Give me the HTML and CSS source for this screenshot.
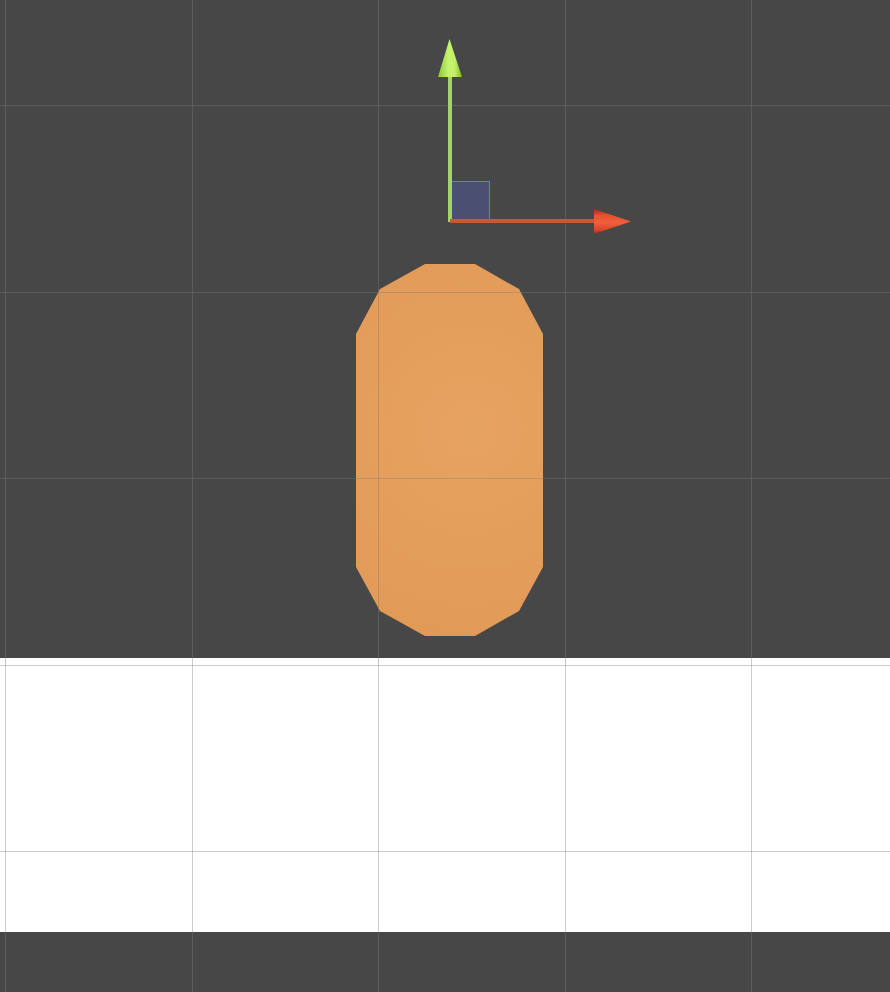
FILE: index.html
```html
<!DOCTYPE html>
<html lang="en">
<head>
<meta charset="utf-8">
<title>Scene View</title>
<link rel="stylesheet" href="styles.css">
</head>
<body>
<div class="scene">
  <div class="viewport"></div>
  <div class="band"></div>
  <div class="footer"></div>

  <svg class="canvas" width="890" height="992" viewBox="0 0 890 992" xmlns="http://www.w3.org/2000/svg">
    <defs>
      <radialGradient id="capFill" cx="470" cy="430" r="220" gradientUnits="userSpaceOnUse">
        <stop offset="0" stop-color="#e7a362"/>
        <stop offset="1" stop-color="#e19956"/>
      </radialGradient>
      <linearGradient id="greenCone" x1="438" y1="0" x2="462" y2="0" gradientUnits="userSpaceOnUse">
        <stop offset="0" stop-color="#8cc63e"/>
        <stop offset="0.45" stop-color="#c6f56c"/>
        <stop offset="0.7" stop-color="#c0f068"/>
        <stop offset="1" stop-color="#7fb536"/>
      </linearGradient>
      <linearGradient id="redCone" x1="0" y1="209" x2="0" y2="234" gradientUnits="userSpaceOnUse">
        <stop offset="0" stop-color="#9a2e16"/>
        <stop offset="0.25" stop-color="#e8502e"/>
        <stop offset="0.55" stop-color="#f0603c"/>
        <stop offset="0.85" stop-color="#d44624"/>
        <stop offset="1" stop-color="#8a2a14"/>
      </linearGradient>
    </defs>

    <polygon class="capsule" fill="url(#capFill)"
      points="425,264 475,264 519,289 543,334 543,567 519,611 475,636 425,636 380,611 356,567 356,334 380,289"/>

    <g class="grid" shape-rendering="crispEdges">
      <line x1="5.5" y1="0" x2="5.5" y2="992"/>
      <line x1="192.5" y1="0" x2="192.5" y2="992"/>
      <line x1="378.5" y1="0" x2="378.5" y2="992"/>
      <line x1="565.5" y1="0" x2="565.5" y2="992"/>
      <line x1="751.5" y1="0" x2="751.5" y2="992"/>
      <line x1="0" y1="105.5" x2="890" y2="105.5"/>
      <line x1="0" y1="292.5" x2="890" y2="292.5"/>
      <line x1="0" y1="478.5" x2="890" y2="478.5"/>
      <line x1="0" y1="665.5" x2="890" y2="665.5"/>
      <line x1="0" y1="851.5" x2="890" y2="851.5"/>
    </g>

    <g class="gizmo">
      <rect class="plane" x="449.5" y="181.5" width="40" height="40"/>
      <rect class="y-shaft" x="448" y="75" width="4" height="147"/>
      <rect class="x-shaft" x="450" y="219" width="146" height="4"/>
      <polygon fill="url(#greenCone)" points="449.5,39 462,77 438,77"/>
      <polygon fill="url(#redCone)" points="594,209 631,221.5 594,234"/>
    </g>
  </svg>
</div>
</body>
</html>
```

FILE: styles.css
```css
html, body {
  margin: 0;
  padding: 0;
  background: #474747;
  font-family: "Liberation Sans", Arial, sans-serif;
}

.scene {
  position: relative;
  width: 890px;
  height: 992px;
  display: flex;
  flex-direction: column;
  overflow: hidden;
}

.viewport {
  height: 658px;
  background: #474747;
}

.band {
  height: 274px;
  background: #ffffff;
}

.footer {
  flex: 1;
  background: #474747;
}

.canvas {
  position: absolute;
  left: 0;
  top: 0;
}

.grid line {
  stroke: rgba(123, 123, 123, 0.39);
  stroke-width: 1;
}

.plane {
  fill: #4c5070;
  stroke: #5f7ed8;
  stroke-width: 1;
}

.y-shaft {
  fill: #a6d464;
}

.x-shaft {
  fill: #c7583a;
}
```
